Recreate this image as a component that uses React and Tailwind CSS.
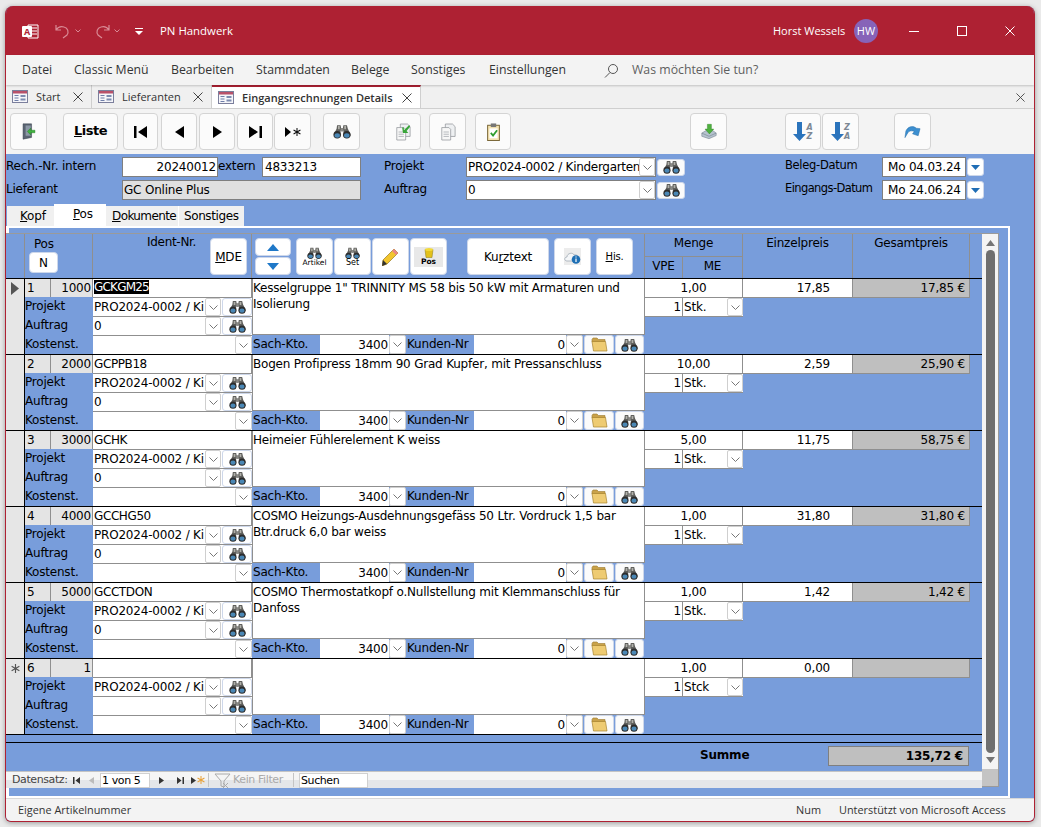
import React from 'react';

const Binoc = ({ w = 20, h = 16 }) => (
  <svg width={w} height={h} viewBox="0 0 20 16">
    <path d="M4.500 1h4l.5 3h2l.5-3h4l1 4 3 6v2H12l-.5-6h-3L8 13H1v-2l3-6z" fill="#5f5f5c" />
    <path d="M5.500 2h2v3.500h-2zM12.500 2h2v3.500h-2z" fill="#b0b0aa" />
    <path d="M8.500 4h3v4h-3z" fill="#8a8a86" />
    <circle cx="4.700" cy="11.700" r="4.200" fill="#2d2d2d" />
    <circle cx="15.300" cy="11.700" r="4.200" fill="#2d2d2d" />
    <ellipse cx="4.700" cy="12.400" rx="3" ry="2.500" fill="#4a87b5" />
    <ellipse cx="15.300" cy="12.400" rx="3" ry="2.500" fill="#4a87b5" />
  </svg>
);

const Chev = () => (
  <svg width="9" height="5" viewBox="0 0 9 5"><path d="M.5.5l4 4 4-4" fill="none" stroke="#777" strokeWidth="1" /></svg>
);

const ChevBox = ({ w = 'w-[16px]' }) => (
  <span className={`${w} h-full shrink-0 bg-white border border-[#cfcfcf] rounded-[2px] flex items-center justify-center`}><Chev /></span>
);

const Folder = () => (
  <svg width="17" height="15" viewBox="0 0 17 15">
    <path d="M1 2.500L2 1h4l1.500 1.500H14V5H1z" fill="#c9a24a" stroke="#9c7a30" strokeWidth=".6" />
    <path d="M1 4.500h13.500L16 14H2.500z" fill="#eecb72" stroke="#a8842f" strokeWidth=".7" />
  </svg>
);

const TBtn = ({ w = 'w-[37px]', ml = 'ml-0', children }) => (
  <button className={`${w} ${ml} h-[37px] shrink-0 bg-[#fbfbfb] border border-[#d4d4d4] rounded-[4px] flex items-center justify-center`}>{children}</button>
);

const GBtn = ({ w = 'w-[37px]', ml = 'ml-0', h = 'h-[37px]', children }) => (
  <button className={`${w} ${ml} ${h} shrink-0 bg-white border border-[#cdd7ea] rounded-[4px] flex items-center justify-center text-black`}>{children}</button>
);

const FormIcon = () => (
  <svg width="16" height="13" viewBox="0 0 16 13">
    <rect x=".5" y=".5" width="15" height="12" fill="#f6f6fa" stroke="#7b7f9c" />
    <rect x="1" y="1" width="14" height="2.500" fill="#b8516a" />
    <path d="M2.500 5.500h4M2.500 8h4M2.500 10.500h4" stroke="#6f7ea8" strokeWidth="1" />
    <rect x="8.500" y="5" width="5" height="2" fill="#7d8bb0" />
    <rect x="8.500" y="8.500" width="5" height="2" fill="#7d8bb0" />
  </svg>
);

const X = ({ s = 10, c = '#444' }) => (
  <svg width={s} height={s} viewBox="0 0 10 10"><path d="M.5.500l9 9M9.500.500l-9 9" stroke={c} strokeWidth="1" fill="none" /></svg>
);

const DocTab = ({ w, label, active }) => (
  <div className={`${w} h-[23px] shrink-0 flex items-center pl-[6px] pr-[8px] border-r border-[#cfcfcf] ${active ? 'bg-white border-t-2 border-t-[#ae2133] font-semibold' : ''}`}>
    <FormIcon />
    <span className="ml-[8px] mt-[1px] text-[11px] text-[#333] flex-1 whitespace-nowrap">{label}</span>
    <X />
  </div>
);

const Tri = ({ d, w = 11, h = 12, c = 'black' }) => (
  <svg width={w} height={h} viewBox={`0 0 ${w} ${h}`}><path d={d} fill={c} /></svg>
);

const Star = ({ c = '#111', s = 9 }) => (
  <svg width={s} height={s} viewBox="0 0 10 10"><path d="M5 0v10M.7 2.500l8.600 5M9.300 2.500l-8.600 5" stroke={c} strokeWidth="1.300" /></svg>
);

const Field = ({ w, ml = 'ml-0', right, bg = 'bg-white', children, pl = 'pl-[3px]' }) => (
  <div className={`${w} ${ml} h-[20px] shrink-0 ${bg} border border-[#7f7f7f] flex items-center whitespace-nowrap overflow-hidden ${right ? 'justify-end pr-[1px]' : pl}`}>{children}</div>
);

const HeadBinoc = ({ ml = 'ml-[1px]' }) => (
  <span className={`w-[28px] ${ml} h-[17px] bg-[#fbfbfb] rounded-[3px] border border-[#cdd7ea] flex items-center justify-center`}><Binoc w={17} h={14} /></span>
);

const DateBtn = () => (
  <span className="w-[17px] ml-[1px] h-[18px] bg-white rounded-[3px] border border-[#cdd7ea] flex items-center justify-center">
    <Tri w={9} h={5} d="M0 0h9L4.500 5z" c="#1f6db5" />
  </span>
);

const Row = ({ pos, num, ident, selected, newRow, auftrag = '0', text, menge, ep, gp, me = 'Stk.' }) => (
  <div className="flex h-[76px] border-t border-black bg-[#789ddb]">
    <div className="w-[19px] shrink-0 bg-[#e6e6e6] border-r border-black flex justify-center pt-[3px]">
      {selected && <Tri w={8} h={13} d="M0 0l8 6.500L0 13z" c="#555" />}
      {newRow && <span className="mt-[2px]"><Star c="#555" /></span>}
    </div>
    <div className="w-[227px] shrink-0 flex flex-col">
      <div className="flex h-[18px]">
        <div className="w-[26px] bg-[#e4e4e4] border-r border-[#8f8f8f] pl-[2px] leading-[18px]">{pos}</div>
        <div className="w-[42px] bg-[#e4e4e4] border-r border-[#8f8f8f] text-right pr-[1px] leading-[18px]">{num}</div>
        <div className="flex-1 bg-white border-r border-[#8f8f8f] pl-[1px] leading-[18px] tracking-[-0.4px]">
          {selected ? <span className="bg-black text-white inline-block h-[14px] leading-[14px] mt-[1px] align-top tracking-[-0.8px]">{ident}</span> : ident}
        </div>
      </div>
      {[['Projekt', 'PRO2024-0002 / Ki'], ['Auftrag', auftrag]].map(([l, v]) => (
        <div key={l} className="flex h-[19px]">
          <div className="w-[68px] leading-[18px]">{l}</div>
          <div className="flex-1 bg-white border-t border-[#8f8f8f] flex pl-[1px] items-stretch">
            <span className="flex-1 leading-[18px] overflow-hidden whitespace-nowrap">{v}</span>
            <ChevBox />
            <span className="w-[30px] ml-[1px] shrink-0 bg-white rounded-[3px] border border-[#cdd7ea] flex items-center justify-center"><Binoc w={17} h={14} /></span>
          </div>
        </div>
      ))}
      <div className="flex h-[19px]">
        <div className="w-[68px] leading-[18px]">Kostenst.</div>
        <div className="flex-1 bg-white border-t border-[#8f8f8f] flex justify-end"><ChevBox w="w-[17px]" /></div>
      </div>
    </div>
    <div className="w-[393px] shrink-0 flex flex-col">
      <div className="h-[56px] bg-white border-l border-r border-b border-[#8f8f8f] pl-[0px] pr-[2px] leading-[16px] pt-[1px]">{text}</div>
      <div className="flex h-[19px] items-stretch">
        <div className="w-[68px] leading-[19px] pl-[1px]">Sach-Kto.</div>
        <div className="w-[69px] bg-white text-right pr-[1px] leading-[20px]">3400</div>
        <ChevBox w="w-[17px]" />
        <div className="w-[68px] leading-[19px] pl-[1px]">Kunden-Nr</div>
        <div className="w-[92px] bg-white text-right pr-[1px] leading-[20px]">0</div>
        <ChevBox w="w-[17px]" />
        <span className="w-[30px] ml-[1px] bg-[#fbfbfb] rounded-[3px] border border-[#cdd7ea] flex items-center justify-center"><Folder /></span>
        <span className="w-[29px] ml-[1px] bg-[#fbfbfb] rounded-[3px] border border-[#cdd7ea] flex items-center justify-center"><Binoc w={17} h={14} /></span>
      </div>
    </div>
    <div className="w-[325px] shrink-0 flex flex-col">
      <div className="flex h-[19px]">
        <div className="w-[98px] bg-white border-r border-b border-[#8f8f8f] text-center leading-[18px]">{menge}</div>
        <div className="w-[110px] bg-white border-r border-b border-[#8f8f8f] text-right pr-[22px] leading-[18px]">{ep}</div>
        <div className="w-[117px] bg-[#bfbfbf] border-r border-b border-[#8f8f8f] text-right pr-[4px] leading-[18px]">{gp}</div>
      </div>
      <div className="flex h-[19px] w-[98px]">
        <div className="w-[38px] bg-white border-r border-b border-[#8f8f8f] text-right pr-[1px] leading-[18px]">1</div>
        <div className="w-[60px] bg-white border-b border-[#8f8f8f] flex pl-[1px]">
          <span className="flex-1 leading-[18px]">{me}</span>
          <ChevBox />
        </div>
      </div>
    </div>
    <div className="w-[12px] shrink-0" />
  </div>
);

const rows = [
  { pos: 1, num: 1000, ident: 'GCKGM25', selected: true, text: 'Kesselgruppe 1" TRINNITY MS 58 bis 50 kW mit Armaturen und Isolierung', menge: '1,00', ep: '17,85', gp: '17,85 €' },
  { pos: 2, num: 2000, ident: 'GCPPB18', text: 'Bogen Profipress 18mm 90 Grad Kupfer, mit Pressanschluss', menge: '10,00', ep: '2,59', gp: '25,90 €' },
  { pos: 3, num: 3000, ident: 'GCHK', text: 'Heimeier Fühlerelement K weiss', menge: '5,00', ep: '11,75', gp: '58,75 €' },
  { pos: 4, num: 4000, ident: 'GCCHG50', text: 'COSMO Heizungs-Ausdehnungsgefäss 50 Ltr. Vordruck 1,5 bar Btr.druck 6,0 bar weiss', menge: '1,00', ep: '31,80', gp: '31,80 €' },
  { pos: 5, num: 5000, ident: 'GCCTDON', text: 'COSMO Thermostatkopf o.Nullstellung mit Klemmanschluss für Danfoss', menge: '1,00', ep: '1,42', gp: '1,42 €' },
  { pos: 6, num: 1, ident: '', newRow: true, auftrag: '', text: '', menge: '1,00', ep: '0,00', gp: '', me: 'Stck' },
];

const Doc = ({ arrow }) => (
  <svg width="16" height="18" viewBox="0 0 18 20">
    <path d="M6 1h8l3 3v11H6z" fill="#eef0f2" stroke="#8d9197" strokeWidth=".8" />
    <path d="M2 5h8l2 2v12H2z" fill="#f7f7f7" stroke="#8d9197" strokeWidth=".8" />
    <path d="M4 10h6M4 12.500h6M4 15h6" stroke="#b0b3b8" />
    {arrow && <path d="M16 2l-6 6V5H8l1 6h6l-2-2 4-5z" fill="#39a53a" />}
  </svg>
);

export default function App() {
  return (
    <div className="w-[1041px] h-[827px] overflow-hidden bg-[#eaeaea] pl-[5px] pt-[6px] text-black" style={{ fontFamily: '"DejaVu Sans", sans-serif' }}>
      <div className="w-[1030px] h-[816px] rounded-t-[8px] rounded-b-[6px] overflow-hidden flex flex-col bg-[#789ddb] border-b border-l border-r border-[#ae2133] shadow-[0_1px_5px_rgba(0,0,0,0.35)]">
        {/* Title bar */}
        <div className="h-[49px] pt-[1px] shrink-0 bg-[#ae2133] flex items-center text-white" style={{ fontFamily: '"Open Sans", sans-serif' }}>
          <svg className="ml-[16px] shrink-0" width="17" height="15" viewBox="0 0 17 15">
            <path d="M6 1h10v13H6z" fill="none" stroke="white" strokeWidth="1" />
            <path d="M8 4h7M9 7h6M9 10h6" stroke="white" strokeWidth="1.200" />
            <rect x="0" y="2" width="10" height="11" rx="1" fill="white" />
            <text x="5" y="11" fontSize="9" fontWeight="700" textAnchor="middle" fill="#ae2133" fontFamily="Open Sans">A</text>
          </svg>
          <svg className="ml-[16px] shrink-0" width="16" height="15" viewBox="0 0 16 15"><path d="M1 1v5h5M1 6c2-3 5-4 8-3 4 1 5 5 3 8l-4 3" fill="none" stroke="#d98a95" strokeWidth="1.200" /></svg>
          <span className="ml-[4px] shrink-0"><svg width="6" height="4" viewBox="0 0 6 4"><path d="M.5.500l2.500 2.500L5.500.500" stroke="#d98a95" fill="none" /></svg></span>
          <svg className="ml-[13px] shrink-0" width="16" height="15" viewBox="0 0 16 15"><path d="M15 1v5h-5M15 6c-2-3-5-4-8-3C3 4 2 8 4 11l4 3" fill="none" stroke="#d98a95" strokeWidth="1.200" /></svg>
          <span className="ml-[4px] shrink-0"><svg width="6" height="4" viewBox="0 0 6 4"><path d="M.5.500l2.500 2.500L5.500.500" stroke="#d98a95" fill="none" /></svg></span>
          <svg className="ml-[15px] shrink-0" width="8" height="7" viewBox="0 0 8 7"><path d="M0 .500h8" stroke="white" /><path d="M0 3h8L4 7z" fill="white" /></svg>
          <span className="ml-[17px] text-[11.400px] w-[613px]">PN Handwerk</span>
          <span className="text-[11px] w-[81px] whitespace-nowrap">Horst Wessels</span>
          <span className="w-[24px] h-[24px] rounded-full bg-[#8763b8] flex items-center justify-center text-[11px]">HW</span>
          <span className="ml-[31px] w-[10px] h-px bg-white" />
          <span className="ml-[38px] w-[10px] h-[10px] border border-white" />
          <span className="ml-[38px]"><X c="white" /></span>
        </div>
        {/* Menu */}
        <div className="h-[30px] shrink-0 bg-[#f3f3f3] flex items-center pl-[16px] text-[12.300px] text-[#333] shadow-[0_1px_2px_rgba(0,0,0,0.2)] z-10" style={{ fontFamily: '"Open Sans", sans-serif' }}>
          <span className="w-[52px]">Datei</span>
          <span className="w-[97px]">Classic Menü</span>
          <span className="w-[85px]">Bearbeiten</span>
          <span className="w-[95px]">Stammdaten</span>
          <span className="w-[60px]">Belege</span>
          <span className="w-[78px]">Sonstiges</span>
          <span className="w-[115px]">Einstellungen</span>
          <svg width="15" height="15" viewBox="0 0 15 15"><circle cx="9" cy="6" r="4.500" fill="none" stroke="#555" /><path d="M6 9.500L1 14.500" stroke="#555" /></svg>
          <span className="ml-[13px] text-[#5f5f5f]">Was möchten Sie tun?</span>
        </div>
        {/* Document tabs */}
        <div className="h-[24px] shrink-0 bg-[#f0f0f0] border-b border-[#cfcfcf] flex items-start" style={{ fontFamily: '"Open Sans", sans-serif' }}>
          <DocTab w="w-[86px]" label="Start" />
          <DocTab w="w-[120px]" label="Lieferanten" />
          <DocTab w="w-[209px]" label="Eingangsrechnungen Details" active />
          <span className="ml-auto mr-[9px] mt-[8px]"><X s={9} /></span>
        </div>
        {/* Toolbar */}
        <div className="h-[45px] shrink-0 bg-[#f3f3f3] flex items-start pt-[4px] pl-[4px]">
          <TBtn>
            <svg width="14" height="17" viewBox="0 0 16 20">
              <path d="M1 1h10v16l-10 2z" fill="#5a6472" stroke="#394350" strokeWidth=".6" />
              <path d="M4 3h6v12H4z" fill="#8c98a6" />
              <path d="M6 10l4-4v2.500h5v3h-5V14z" fill="#3fb23f" stroke="#1f7a1f" strokeWidth=".5" />
            </svg>
          </TBtn>
          <TBtn w="w-[55px]" ml="ml-[16px]"><span className="font-bold text-[13px] tracking-[-0.5px] mb-[1px]"><span className="underline">L</span>iste</span></TBtn>
          <TBtn w="w-[35px]" ml="ml-[5px]"><Tri w={13} h={12} d="M0 0h2.500v12H0zM13 0v12L4 6z" /></TBtn>
          <TBtn w="w-[36px]" ml="ml-[3px]"><Tri w={9} h={12} d="M9 0v12L0 6z" /></TBtn>
          <TBtn w="w-[36px]" ml="ml-[2px]"><Tri w={9} h={12} d="M0 0v12l9-6z" /></TBtn>
          <TBtn w="w-[36px]" ml="ml-[2px]"><Tri w={13} h={12} d="M0 0v12l9-6zM10.500 0H13v12h-2.500z" /></TBtn>
          <TBtn w="w-[37px]" ml="ml-[1px]"><span className="flex items-center gap-[2px]"><Tri w={6} h={10} d="M0 0v10l6-5z" /><Star s={8} /></span></TBtn>
          <TBtn ml="ml-[12px]"><Binoc w={18} h={15} /></TBtn>
          <TBtn ml="ml-[24px]"><Doc arrow /></TBtn>
          <TBtn ml="ml-[8px]"><Doc /></TBtn>
          <TBtn w="w-[36px]" ml="ml-[9px]">
            <svg width="13" height="18" viewBox="0 0 14 20">
              <rect x=".5" y="2.500" width="13" height="17" fill="#f4e3b0" stroke="#6e5a2a" />
              <rect x="4" y=".5" width="6" height="4" fill="#777" />
              <rect x="2.500" y="6" width="9" height="11" fill="#fff" />
              <path d="M4 11l2.500 3L11 8" stroke="#2f9e2f" strokeWidth="2" fill="none" />
            </svg>
          </TBtn>
          <TBtn ml="ml-[179px]">
            <svg width="16" height="17" viewBox="0 0 20 20">
              <path d="M1 12l5-3h9l4 3v3L10 19 1 16z" fill="#b6c3cf" stroke="#66727e" strokeWidth=".6" />
              <path d="M1 12l9 4 9-4" fill="none" stroke="#66727e" strokeWidth=".6" />
              <path d="M8 1h5v6h3l-5.500 6L5 7h3z" fill="#4fb13f" stroke="#2c7d24" strokeWidth=".5" />
            </svg>
          </TBtn>
          <TBtn w="w-[36px]" ml="ml-[58px]">
            <span className="flex items-center">
              <svg width="13" height="19" viewBox="0 0 13 19"><path d="M4 0h5v12h4l-6.500 7L0 12h4z" fill="#2b74bc" /></svg>
              <span className="flex flex-col font-bold italic text-[8px] leading-[9px] text-[#7d8894]"><span>A</span><span>Z</span></span>
            </span>
          </TBtn>
          <TBtn ml="ml-[1px]">
            <span className="flex items-center">
              <svg width="13" height="19" viewBox="0 0 13 19"><path d="M4 0h5v12h4l-6.500 7L0 12h4z" fill="#2b74bc" /></svg>
              <span className="flex flex-col font-bold italic text-[8px] leading-[9px] text-[#7d8894]"><span>Z</span><span>A</span></span>
            </span>
          </TBtn>
          <TBtn ml="ml-[35px]">
            <svg width="17" height="13" viewBox="0 0 18 13"><path d="M1 13L2 6C4 1 10 0 13 3l4 .5L15 11 9 9l2-2.500C8 5 5 6 4 8z" fill="#3c8fd0" stroke="#1e6aa6" strokeWidth=".5" /></svg>
          </TBtn>
        </div>
        {/* Form */}
        <div className="flex-1 flex flex-col text-[12px] tracking-[-0.2px]">
          <div className="h-[51px] shrink-0 pt-[3px] flex flex-col gap-[3px]">
            <div className="flex items-center h-[20px]">
              <span className="w-[116px] pb-[2px]">Rech.-Nr. intern</span>
              <Field w="w-[96px]" right>20240012</Field>
              <span className="w-[44px] pb-[2px]">extern</span>
              <Field w="w-[99px]" pl="pl-[2px]">4833213</Field>
              <span className="ml-[23px] w-[82px] pb-[2px]">Projekt</span>
              <Field w="w-[190px]" pl="pl-[1px]"><span className="flex-1 overflow-hidden tracking-[-0.3px]">PRO2024-0002 / Kindergarten</span><ChevBox /></Field>
              <HeadBinoc />
              <span className="ml-[100px] w-[97px] pb-[2px] text-[11.500px] tracking-[-0.3px]">Beleg-Datum</span>
              <Field w="w-[84px]" pl="pl-[5px]">Mo 04.03.24</Field>
              <DateBtn />
            </div>
            <div className="flex items-center h-[20px]">
              <span className="w-[116px] pb-[2px]">Lieferant</span>
              <Field w="w-[239px]" bg="bg-[#e0e0e0]" pl="pl-[1px]">GC Online Plus</Field>
              <span className="ml-[23px] w-[82px] pb-[2px]">Auftrag</span>
              <Field w="w-[190px]" pl="pl-[1px]"><span className="flex-1">0</span><ChevBox /></Field>
              <HeadBinoc />
              <span className="ml-[100px] w-[97px] pb-[2px] whitespace-nowrap text-[11.500px] tracking-[-0.6px]">Eingangs-Datum</span>
              <Field w="w-[84px]" pl="pl-[5px]">Mo 24.06.24</Field>
              <DateBtn />
            </div>
          </div>
          {/* Tabs */}
          <div className="h-[21px] shrink-0 flex items-end pl-[1px]">
            <div className="w-[47px] h-[20px] bg-[#f0f0f0] pl-[13px] leading-[21px]"><span className="underline">K</span>opf</div>
            <div className="w-[52px] h-[22px] bg-white pl-[19px] leading-[21px] relative z-10"><span className="underline">P</span>os</div>
            <div className="w-[73px] h-[20px] bg-[#f0f0f0] pl-[6px] leading-[21px] border-r border-white tracking-[-0.6px] whitespace-nowrap"><span className="underline">D</span>okumente</div>
            <div className="w-[65px] h-[20px] bg-[#f0f0f0] pl-[5px] leading-[21px] whitespace-nowrap tracking-[-0.4px]">Sonstiges</div>
          </div>
          {/* Tab page */}
          <div className="h-[572px] shrink-0 w-[1004px] border-t-2 border-r-2 border-b-2 border-l-[3px] border-white pt-[5px] bg-[#789ddb]">
            <div className="w-[993px] -ml-[3px] h-[554px] flex border-r border-b border-t border-[#9a9a9a] bg-[#789ddb] relative">
              <div className="w-[976px] shrink-0 flex flex-col">
                {/* Grid header */}
                <div className="h-[44px] shrink-0 flex">
                  <div className="w-[19px] shrink-0 border-r border-[#8f8f8f]" />
                  <div className="w-[68px] shrink-0 border-r border-[#8f8f8f] flex flex-col pl-[4px]">
                    <span className="pl-[5px] pt-[1px] leading-[16px] mt-[1px]">Pos</span>
                    <GBtn w="w-[29px]" h="h-[21px]" ml="ml-0"><span className="text-[12px]">N</span></GBtn>
                  </div>
                  <div className="w-[159px] shrink-0 border-r border-[#8f8f8f] flex">
                    <span className="w-[117px] pl-[54px] leading-[16px] whitespace-nowrap tracking-[-0.3px]">Ident-Nr.</span>
                    <GBtn ml="mt-[4px]"><span><span className="underline">M</span>DE</span></GBtn>
                  </div>
                  <div className="w-[393px] shrink-0 border-r border-[#8f8f8f] flex pt-[4px] pl-[3px]">
                    <div className="flex flex-col w-[36px] gap-[1px]">
                      <GBtn w="w-[36px]" h="h-[18px]"><Tri w={12} h={7} d="M6 0l6 7H0z" c="#1f78c8" /></GBtn>
                      <GBtn w="w-[36px]" h="h-[18px]"><Tri w={12} h={7} d="M0 0h12L6 7z" c="#1f78c8" /></GBtn>
                    </div>
                    <GBtn ml="ml-[5px]"><span className="flex flex-col items-center"><Binoc w={15} h={12} /><span className="text-[7.500px] leading-[8px] tracking-normal">Artikel</span></span></GBtn>
                    <GBtn ml="ml-[1px]"><span className="flex flex-col items-center"><Binoc w={15} h={12} /><span className="text-[8px] leading-[8px] tracking-normal">Set</span></span></GBtn>
                    <GBtn ml="ml-[1px]">
                      <svg width="17" height="18" viewBox="0 0 17 18"><path d="M12 1l4 4L5 16l-5 2 1-6z" fill="#f2c52e" stroke="#8a6a10" strokeWidth=".6" /><path d="M12 1l4 4-2 2-4-4z" fill="#e98686" /><path d="M0 18l1-6 4 4z" fill="#333" /></svg>
                    </GBtn>
                    <GBtn ml="ml-[1px]">
                      <span className="w-[29px] h-[20px] bg-[#e8e8e8] flex flex-col items-center">
                        <svg width="10" height="11" viewBox="0 0 10 10"><path d="M1 2h8l-1 8H2z" fill="#e3c11a" stroke="#8b7a10" strokeWidth=".5" /><ellipse cx="5" cy="2" rx="4" ry="1.500" fill="#f2d93a" /></svg>
                        <span className="text-[7.500px] leading-[8px] font-bold tracking-normal">Pos</span>
                      </span>
                    </GBtn>
                    <GBtn w="w-[82px]" ml="ml-[20px]"><span>Ku<span className="underline">r</span>ztext</span></GBtn>
                    <GBtn ml="ml-[5px]">
                      <span className="w-[17px] h-[17px] bg-[#ececec] flex items-center justify-center">
                        <svg width="17" height="14" viewBox="0 0 17 14"><path d="M3 11c-3 0-3-4 0-4 0-4 6-5 7-2 3-1 5 2 3 4v2z" fill="#f4f6f8" stroke="#9aa5b0" strokeWidth=".7" /><circle cx="12" cy="9.500" r="4.300" fill="#1e6fb4" /><path d="M12 8.500v3.500M12 6.500v1" stroke="white" strokeWidth="1.200" /></svg>
                      </span>
                    </GBtn>
                    <GBtn ml="ml-[5px]"><span className="text-[10px]"><span className="underline">H</span>is.</span></GBtn>
                  </div>
                  <div className="w-[98px] shrink-0 border-r border-[#8f8f8f] flex flex-col">
                    <div className="h-[23px] border-b border-[#8f8f8f] text-center leading-[18px]">Menge</div>
                    <div className="flex-1 flex">
                      <div className="w-[38px] border-r border-[#8f8f8f] text-center leading-[18px]">VPE</div>
                      <div className="flex-1 text-center leading-[18px]">ME</div>
                    </div>
                  </div>
                  <div className="w-[110px] shrink-0 border-r border-[#8f8f8f] text-center leading-[18px]">Einzelpreis</div>
                  <div className="w-[117px] shrink-0 border-r border-[#8f8f8f] text-center leading-[18px]">Gesamtpreis</div>
                </div>
                {/* Rows */}
                {rows.map((r) => <Row key={r.pos} {...r} />)}
                {/* Footer */}
                <div className="h-[9px] shrink-0 border-t border-b border-black" />
                <div className="h-[28px] shrink-0 flex items-start pt-[3px]">
                  <span className="ml-[694px] w-[128px] font-bold leading-[19px]">Summe</span>
                  <span className="w-[141px] h-[20px] bg-[#bfbfbf] border border-[#7f7f7f] text-right pr-[5px] font-bold leading-[18px]">135,72 €</span>
                </div>
                {/* Nav bar */}
                <div className="h-[17px] shrink-0 bg-[linear-gradient(#f5f5f5_50%,#e4e6e9_50%)] border-t border-[#c4c4c4] flex items-center text-[11px] tracking-[-0.4px] text-[#444]">
                  <span className="ml-[6px] w-[61px]">Datensatz:</span>
                  <Tri w={7} h={7} d="M0 0h1.500v7H0zM7 0v7L2.500 3.500z" c="#333" />
                  <span className="ml-[9px]"><Tri w={5} h={7} d="M5 0v7L0 3.500z" c="#bbb" /></span>
                  <span className="ml-[6px] w-[50px] h-[15px] bg-white border border-[#d0d0d0] text-black leading-[13px] pl-[1px]">1 von 5</span>
                  <span className="ml-[9px]"><Tri w={5} h={7} d="M0 0v7l5-3.500z" c="#333" /></span>
                  <span className="ml-[13px]"><Tri w={7} h={7} d="M0 0v7l4.500-3.500zM5.500 0H7v7H5.500z" c="#333" /></span>
                  <span className="ml-[7px]"><Tri w={5} h={7} d="M0 0v7l5-3.500z" c="#333" /></span>
                  <span className="ml-[1px]"><Star c="#e8a33d" s={8} /></span>
                  <span className="ml-[3px] w-px h-[14px] bg-[#c4c4c4]" />
                  <svg className="ml-[5px]" width="17" height="15" viewBox="0 0 17 15"><path d="M1 1h15l-6 7v6l-3-1V8z" fill="none" stroke="#aaa" /><path d="M9 10l5 5M14 10l-5 5" stroke="#aaa" /></svg>
                  <span className="ml-[2px] w-[60px] text-[#aaa] whitespace-nowrap">Kein Filter</span>
                  <span className="w-px h-[14px] bg-[#c4c4c4]" />
                  <span className="ml-[5px] w-[69px] h-[15px] bg-white border border-[#d0d0d0] text-black leading-[13px] pl-[1px]">Suchen</span>
                </div>
              </div>
              {/* Scrollbar */}
              <div className="w-[16px] shrink-0 flex flex-col">
                <div className="flex-1 bg-[#f4f4f4] flex flex-col items-center pt-[6px] pb-[6px]">
                  <Tri w={9} h={6} d="M4.500 0L9 6H0z" c="#757575" />
                  <div className="w-[9px] flex-1 bg-[#6f6f6f] rounded-[5px] my-[4px]" />
                  <Tri w={9} h={6} d="M0 0h9L4.500 6z" c="#757575" />
                </div>
                <div className="h-[17px] shrink-0 bg-[#c4c4c4]" />
              </div>
            </div>
          </div>
          <div className="flex-1 bg-[#789ddb]" />
        </div>
        {/* Status bar */}
        <div className="h-[24px] shrink-0 bg-[#f3f3f3] border-t border-[#d8d8d8] flex items-center text-[10.900px] text-[#333] pl-[12px]" style={{ fontFamily: '"Open Sans", sans-serif' }}>
          <span className="w-[778px]">Eigene Artikelnummer</span>
          <span className="w-[43px]">Num</span>
          <span className="whitespace-nowrap">Unterstützt von Microsoft Access</span>
        </div>
      </div>
    </div>
  );
}
